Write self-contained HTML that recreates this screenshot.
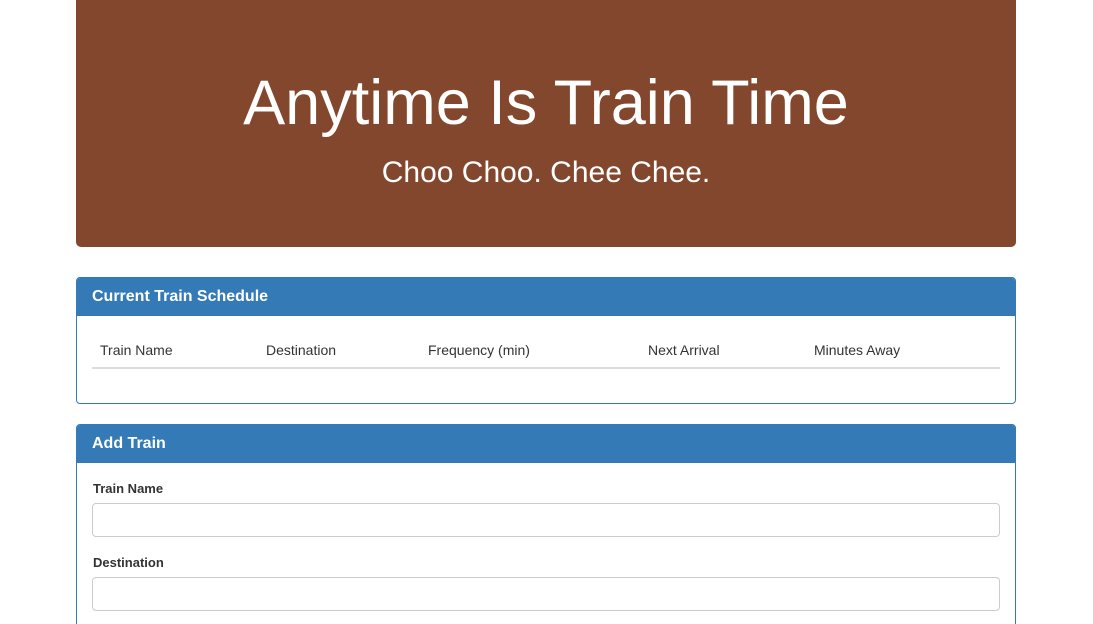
<!DOCTYPE html>
<html><head><style>
html,body{margin:0;height:624px;overflow:hidden;}
body{background:#fff;font-family:"Liberation Sans",sans-serif;color:#333;font-size:14px;position:relative;}
.jumbo{position:absolute;left:76px;top:0;width:940px;height:247px;background:#83472e;border-radius:0 0 5px 5px;color:#fff;text-align:center;}
.jumbo h1{margin:0;position:absolute;top:68px;width:100%;font-size:63px;font-weight:normal;line-height:70px;}
.jumbo p{margin:0;position:absolute;top:155px;width:100%;font-size:30px;line-height:36px;}
.panel{position:absolute;left:76px;width:938px;border:1px solid #337ab7;border-radius:4px;overflow:hidden;}
.ph{background:#337ab7;color:#fff;font-weight:bold;font-size:16px;height:38px;line-height:38px;padding-left:15px;}
.th{position:absolute;top:64px;font-size:14px;}
label{position:absolute;left:16px;font-weight:bold;font-size:13px;color:#333;}
.inp{position:absolute;left:15px;width:906px;height:32px;border:1px solid #ccc;border-radius:4px;}
</style></head><body>
<div class="jumbo"><h1>Anytime Is Train Time</h1><p>Choo Choo. Chee Chee.</p></div>
<div class="panel" style="top:277px;height:125px">
<div class="ph">Current Train Schedule</div>
<span class="th" style="left:23px">Train Name</span>
<span class="th" style="left:189px">Destination</span>
<span class="th" style="left:351px">Frequency (min)</span>
<span class="th" style="left:571px">Next Arrival</span>
<span class="th" style="left:737px">Minutes Away</span>
<div style="position:absolute;left:15px;top:89px;width:908px;height:2px;background:#ddd"></div>
</div>
<div class="panel" style="top:424px;height:220px">
<div class="ph">Add Train</div>
<label style="top:56px">Train Name</label>
<div class="inp" style="top:78px"></div>
<label style="top:130px">Destination</label>
<div class="inp" style="top:152px"></div>
</div>
</body></html>
